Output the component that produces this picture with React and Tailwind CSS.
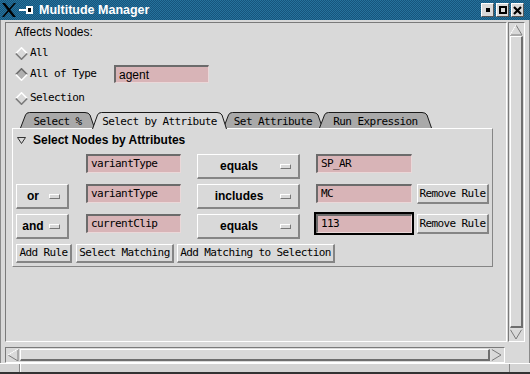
import React from "react";

const sans = "font-['Liberation_Sans',Arial,sans-serif]";
const mono = "font-['DejaVu_Sans_Mono',monospace] tracking-[-0.6px]";
const raised =
  "border-t border-l border-r-2 border-b-2 border-t-white border-l-white border-r-[#858585] border-b-[#858585]";
const field =
  "bg-[#d8b4b7] border-t-2 border-l-2 border-t-[#6b6b6b] border-l-[#6b6b6b] border-r border-b border-r-[#ead8d9] border-b-[#ead8d9]";

function XLogo() {
  return (
    <svg width="16" height="16" viewBox="0 0 16 16" className="ml-[1px]">
      <polygon points="1,1 4,1 15,15 12,15" fill="#000" />
      <polygon points="13,1 15,1 3,15 1,15" fill="#000" />
    </svg>
  );
}

function PinIcon() {
  return (
    <svg width="15" height="10" viewBox="0 0 15 10" className="ml-[2px]">
      <rect x="0" y="4" width="7" height="2" fill="#fff" />
      <rect x="7" y="1" width="7" height="8" fill="#fff" />
      <rect x="9" y="3" width="3" height="4" fill="#000" />
    </svg>
  );
}

function TitleButton({ kind }) {
  return (
    <div className="w-[13px] h-[14px] bg-[#d9d9d9] flex items-center justify-center border-t border-l border-b border-r border-t-white border-l-white border-b-[#555] border-r-[#555]">
      {kind === "min" && <div className="w-[4px] h-[4px] bg-black" />}
      {kind === "max" && <div className="w-[8px] h-[8px] border-2 border-black" />}
      {kind === "close" && (
        <svg width="9" height="9" viewBox="0 0 9 9">
          <path d="M1 1 L8 8 M8 1 L1 8" stroke="#000" strokeWidth="2.2" />
        </svg>
      )}
    </div>
  );
}

function Diamond({ on }) {
  return (
    <svg width="13" height="13" viewBox="0 0 13 13">
      <path d="M6.5 0.5 L12.5 6.5 L6.5 12.5 L0.5 6.5Z" fill={on ? "#b0b0b0" : "#d9d9d9"} />
      <path d="M0.8 6.5 L6.5 0.8 L12.2 6.5" stroke={on ? "#6b6b6b" : "#ffffff"} strokeWidth="1.6" fill="none" />
      <path d="M0.8 6.5 L6.5 12.2 L12.2 6.5" stroke={on ? "#ffffff" : "#7a7a7a"} strokeWidth="1.6" fill="none" />
    </svg>
  );
}

function Radio({ label, on, className }) {
  return (
    <div className={`flex items-center h-[14px] ml-[3px] ${className}`}>
      <Diamond on={on} />
      <span className={`ml-[2px] text-[11px] leading-[14px] ${mono}`}>{label}</span>
    </div>
  );
}

function Tab({ label, width, selected, className }) {
  const h = selected ? 17 : 16;
  return (
    <div className={`relative h-[17px] shrink-0 ${selected ? "z-20" : "z-10"} ${className}`} style={{ width }}>
      <svg className="absolute inset-0" width={width} height="17" viewBox={`0 0 ${width} 17`}>
        <path
          d={`M0.5 ${h} L5.5 3 Q6.5 0.5 9.5 0.5 L ${width - 10} 0.5 Q ${width - 6.5} 0.5 ${width - 5} 3 L ${width - 0.5} ${h}`}
          fill={selected ? "#d9d9d9" : "#a9a9a9"}
          stroke="#1a1a1a"
          strokeWidth="1"
        />
      </svg>
      <div className={`relative h-full flex items-start justify-center pt-[4px] text-[11px] leading-[12px] ${mono}`}>
        {label}
      </div>
    </div>
  );
}

function OptionMenu({ label, className }) {
  return (
    <div className={`h-[25px] flex items-center ${raised} ${className}`}>
      <span className="flex-1 text-center font-bold text-[12px] leading-[14px]">{label}</span>
      <span className="w-[11px] h-[5px] mr-[7px] border-t border-l border-b border-r border-t-white border-l-white border-b-[#777] border-r-[#777]" />
    </div>
  );
}

function Field({ children, className, sansText }) {
  return (
    <div className={`${field} ${className}`}>
      <div className={`pl-[3px] pt-[1px] ${sansText ? `text-[12px] leading-[14px] ${sans}` : `text-[11px] leading-[14px] ${mono}`}`}>
        {children}
      </div>
    </div>
  );
}

function Button({ children, className }) {
  return (
    <div className={`flex items-center justify-center text-[11px] leading-[12px] ${mono} ${raised} ${className}`}>
      {children}
    </div>
  );
}

function Row({ op, attr, cmp, val, remove, focus }) {
  return (
    <div className="flex items-start h-[25px]">
      <div className="w-[70px]">{op && <OptionMenu label={op} className="w-[53px]" />}</div>
      <div className="w-[111px]">
        <Field className="w-[95px] h-[19px]">{attr}</Field>
      </div>
      <div className="w-[119px]">
        <OptionMenu label={cmp} className="w-[103px]" />
      </div>
      <div className="w-[101px]">
        <Field className={`w-[96px] h-[19px] ${focus ? "ring-2 ring-black" : ""}`}>{val}</Field>
      </div>
      {remove && <Button className="w-[72px] h-[20px]">Remove Rule</Button>}
    </div>
  );
}

function Arrow({ dir }) {
  const pts = {
    up: "6,1 12,11 0,11",
    down: "0,1 12,1 6,11",
    left: "1,6 11,0 11,12",
    right: "1,0 11,6 1,12",
  }[dir];
  return (
    <svg width="13" height="12" viewBox="0 0 13 12" className="shrink-0">
      <polygon points={pts} fill="#d9d9d9" stroke="#7a7a7a" strokeWidth="1" />
      {dir === "up" && <path d="M0 11 L6 1" stroke="#fff" strokeWidth="1.2" />}
      {dir === "down" && <path d="M0 1 L12 1" stroke="#fff" strokeWidth="1.2" />}
      {dir === "left" && <path d="M1 6 L11 0" stroke="#fff" strokeWidth="1.2" />}
      {dir === "right" && <path d="M1 0 L1 12" stroke="#fff" strokeWidth="1.2" />}
    </svg>
  );
}

export default function App() {
  return (
    <div className={`w-[530px] h-[374px] bg-[#d9d9d9] flex flex-col overflow-hidden text-black ${sans}`}>
      {/* TITLE BAR */}
      <div className="h-[20px] shrink-0 flex items-center bg-[image:repeating-conic-gradient(#16557c_0_25%,#26729c_0_50%)] bg-[length:2px_2px]">
        <XLogo />
        <PinIcon />
        <span className="ml-[5px] text-white font-bold text-[12.5px] leading-[14px]">Multitude Manager</span>
        <div className="ml-auto mr-[6px] flex gap-[2px]">
          <TitleButton kind="min" />
          <TitleButton kind="max" />
          <TitleButton kind="close" />
        </div>
      </div>

      {/* BODY */}
      <div className="h-[343px] shrink-0 flex flex-col border-l border-r border-l-[#8a8a8a] border-r-[#8a8a8a] pt-[2px] pl-[4px] pr-[4px] bg-[#d9d9d9]">
        <div className="flex h-[320px] gap-[1px]">
          {/* VIEWPORT */}
          <div className="w-[502px] border-t border-l border-b border-r border-t-[#7a7a7a] border-l-[#7a7a7a] border-b-white border-r-white pl-[6px] pt-[2px] flex flex-col">
            <div className="ml-[3px] text-[12px] leading-[14px]">Affects Nodes:</div>
            <Radio className="mt-[7px]" label="All" />
            <div className="mt-[5px] ml-[3px] flex items-center h-[18px]">
              <Diamond on />
              <span className={`ml-[2px] w-[84px] text-[11px] leading-[14px] ${mono}`}>All of Type</span>
              <Field sansText className="w-[95px] h-[18px]">agent</Field>
            </div>
            <Radio className="mt-[8px]" label="Selection" />

            {/* TABS */}
            <div className="mt-[7px] flex h-[17px]">
              <Tab label="Select %" width={75} className="ml-[8px]" />
              <Tab label="Select by Attribute" width={135} selected className="-ml-[3px]" />
              <Tab label="Set Attribute" width={100} className="-ml-[4px]" />
              <Tab label="Run Expression" width={113} className="-ml-[4px]" />
            </div>

            {/* PANEL */}
            <div className="-mt-[1px] w-[481px] h-[139px] border-t border-l border-b border-r border-t-white border-l-white border-b-[#858585] border-r-[#858585] flex flex-col">
              <div className="pl-[4px] pt-[4px] flex items-center h-[18px]">
                <svg width="9" height="7" viewBox="0 0 9 7">
                  <polygon points="0.5,0.5 8.5,0.5 4.5,6.5" fill="none" stroke="#333" strokeWidth="1" />
                </svg>
                <span className="ml-[7px] font-bold text-[12px] leading-[14px]">Select Nodes by Attributes</span>
              </div>
              <div className="pl-[3px] mt-[7px] flex flex-col gap-[5px]">
                <Row attr="variantType" cmp="equals" val="SP_AR" />
                <Row op="or" attr="variantType" cmp="includes" val="MC" remove />
                <Row op="and" attr="currentClip" cmp="equals" val="113" remove focus />
                <div className="flex h-[19px] gap-[4px]">
                  <Button className="w-[56px]">Add Rule</Button>
                  <Button className="w-[98px]">Select Matching</Button>
                  <Button className="w-[158px] -ml-[1px]">Add Matching to Selection</Button>
                </div>
              </div>
            </div>
          </div>

          {/* VERTICAL SCROLLBAR */}
          <div className="w-[17px] flex flex-col items-center border-t border-l border-b border-r border-t-[#7a7a7a] border-l-[#7a7a7a] border-b-white border-r-white py-[1px]">
            <Arrow dir="up" />
            <div className="flex-1 w-[13px] border-t border-l border-r-2 border-b-2 border-t-white border-l-white border-r-[#6e6e6e] border-b-[#6e6e6e]" />
            <Arrow dir="down" />
          </div>
        </div>

        {/* HORIZONTAL SCROLLBAR */}
        <div className="mt-[5px] w-[500px] h-[16px] flex items-center border-t border-l border-b border-r border-t-[#7a7a7a] border-l-[#7a7a7a] border-b-white border-r-white px-[1px]">
          <Arrow dir="left" />
          <div className="flex-1 h-[12px] border-t border-l border-r-2 border-b-2 border-t-white border-l-white border-r-[#6e6e6e] border-b-[#6e6e6e]" />
          <Arrow dir="right" />
        </div>
      </div>

      {/* BOTTOM FRAME */}
      <div className="h-[11px] shrink-0 flex border-t border-t-white border-b-2 border-b-[#333] bg-[#d4d4d4]">
        <div className="w-[20px] border-r border-r-[#8a8a8a]" />
        <div className="flex-1 border-l border-l-white" />
        <div className="w-[21px] border-l border-l-[#8a8a8a]" />
      </div>
    </div>
  );
}
